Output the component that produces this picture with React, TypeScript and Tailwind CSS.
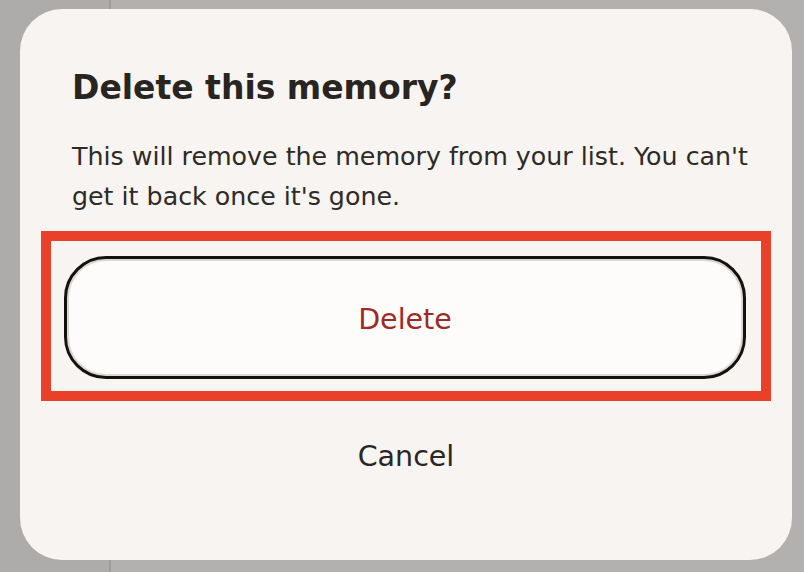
import React from 'react';

// Backdrop: dimmed app behind the sheet (sidebar + content column)
const Backdrop: React.FC = () => (
  <div className="flex h-full w-full bg-[#acaaa8]">
    <div className="w-[111px] shrink-0 border-r-2 border-[#9f9d9b] bg-[#aeacaa]" />
    <div className="flex-1 bg-[#b3b1af]" />
  </div>
);

interface ConfirmDeleteProps {
  onDelete?: () => void;
  onCancel?: () => void;
}

const ConfirmDelete: React.FC<ConfirmDeleteProps> = ({ onDelete, onCancel }) => {
  return (
    <div className="flex h-[551px] w-[772px] flex-col rounded-[42px] bg-[#f7f4f1] pt-[59px]">
      <h2 className="px-[52px] text-[33px] font-bold leading-[40px] text-[#28241f]">
        Delete this memory?
      </h2>
      <p className="mt-[29px] pl-[52px] pr-[36px] text-[25.3px] leading-[40px] text-[#2e2a26]">
        This will remove the memory from your list. You can't get it back once it's gone.
      </p>

      {/* highlighted primary action */}
      <div className="mx-[21px] mt-[14px] border-[10px] border-[#e94129] pb-[12px] pl-[13px] pr-[15px] pt-[15px]">
        <button
          onClick={onDelete}
          className="flex h-[123px] w-full items-center justify-center rounded-[42px] border-[3.5px] border-[#15120e] bg-[#fdfcfb] pt-[6px] text-[28.5px] text-[#9c2a26] shadow-[inset_0_0_0_2px_#dad8d5]"
        >
          Delete
        </button>
      </div>

      <button
        onClick={onCancel}
        className="mt-[38px] h-[36px] self-center text-[28.5px] leading-[36px] text-[#2a2623]"
      >
        Cancel
      </button>
    </div>
  );
};

export default function App() {
  return (
    <div
      className="relative h-[572px] w-[804px] overflow-hidden"
      style={{ fontFamily: '"DejaVu Sans", "Noto Sans", sans-serif' }}
    >
      <Backdrop />
      <div className="absolute left-[20px] top-[9px]">
        <ConfirmDelete />
      </div>
    </div>
  );
}
